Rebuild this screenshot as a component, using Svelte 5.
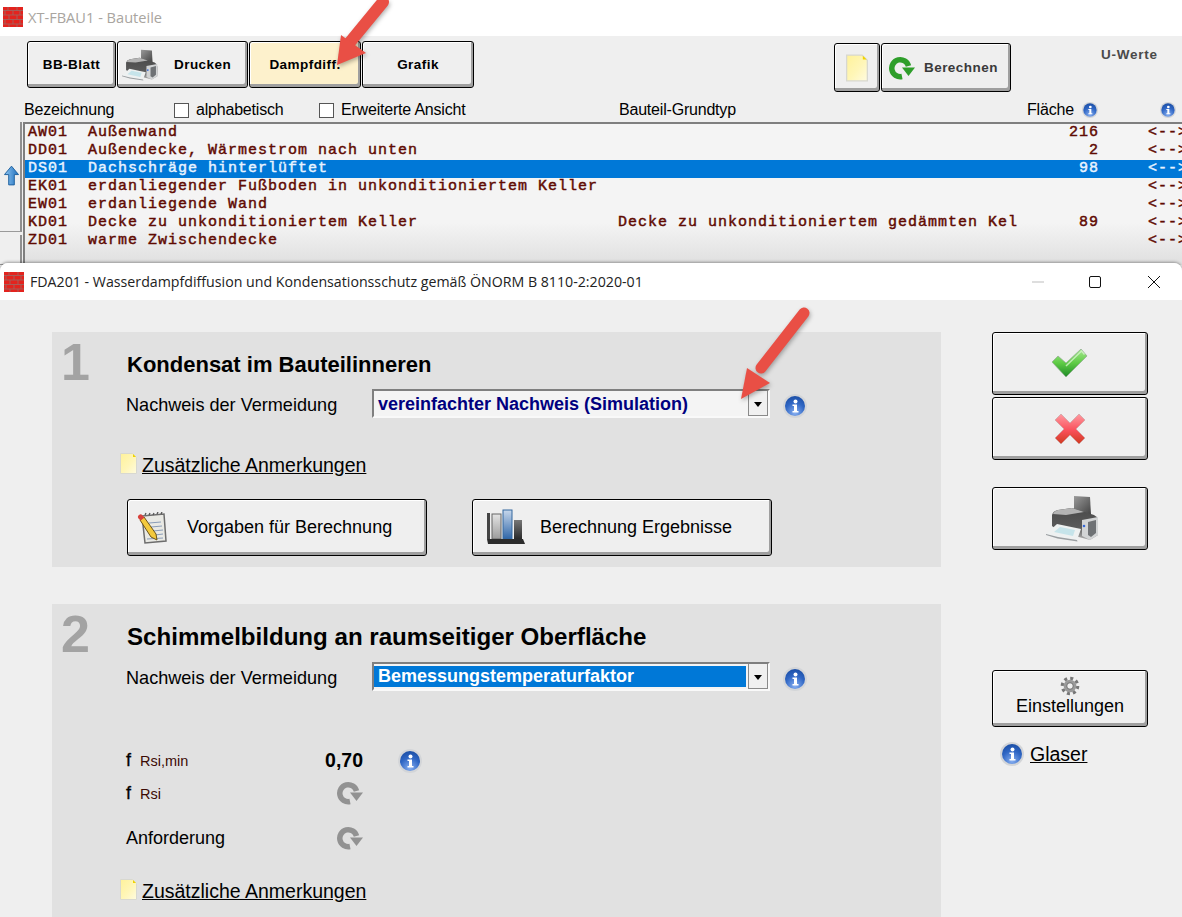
<script>
  const rows = [
    { code: 'AW01', name: 'Außenwand', typ: '', area: '216' },
    { code: 'DD01', name: 'Außendecke, Wärmestrom nach unten', typ: '', area: '2' },
    { code: 'DS01', name: 'Dachschräge hinterlüftet', typ: '', area: '98', sel: true },
    { code: 'EK01', name: 'erdanliegender Fußboden in unkonditioniertem Keller', typ: '', area: '' },
    { code: 'EW01', name: 'erdanliegende Wand', typ: '', area: '' },
    { code: 'KD01', name: 'Decke zu unkonditioniertem Keller', typ: 'Decke zu unkonditioniertem gedämmten Kel', area: '89' },
    { code: 'ZD01', name: 'warme Zwischendecke', typ: '', area: '' }
  ];
</script>

{#snippet brick()}
  <svg class="brick" width="20" height="20" viewBox="0 0 20 20">
    <rect width="20" height="20" fill="#e3231e"/>
    <path d="M0 3.500h20M0 8h20M0 12.500h20M0 17h20M5 0v3.500M14 0v3.500M2 3.500v4.500M10 3.500v4.500M17 3.500v4.500M6 8v4.500M14 8v4.500M2 12.500v4.500M10 12.500v4.500M17 12.500v4.500M6 17v3M14 17v3" stroke="#9a6a66" stroke-width=".8" fill="none"/>
  </svg>
{/snippet}

{#snippet printer(w, h)}
  <svg width={w} height={h} viewBox="0 0 53 47">
    <path d="M28 1l16 1 1 17H28z" fill="url(#prBack)"/>
    <path d="M6 20q1-4 6-5l14-2 22 7q4 2 4 6v14l-8 5-30-8-8-6z" fill="url(#prBody)"/>
    <path d="M7 19q1-3 5-4l14-2 12 4-18 3z" fill="#b4b4b4"/>
    <path d="M36 25l16-3v18l-8 5-8-4z" fill="#d2d4d5"/>
    <path d="M42 27l8-2v13l-5 4-3-2z" fill="#6f7275"/>
    <circle cx="38" cy="31" r="1.300" fill="#3568d8"/>
    <path d="M0 39l11-10 24 5-4 11-19-3z" fill="#eef1f1"/>
    <path d="M8 37l6-5 15 3-2 6z" fill="#c6e4ea"/>
    <path d="M0 39l12 3 19 3 .5 1.500-20-3L0 40z" fill="#9a9ea1"/>
  </svg>
{/snippet}

{#snippet info(size = 24)}
  <svg class="info" width={size} height={size} viewBox="0 0 24 24">
    <circle cx="12" cy="12" r="12" fill="#d3d5d8"/>
    <circle cx="12" cy="12" r="10" fill="url(#infoFill)"/>
    <circle cx="12.500" cy="7.500" r="2" fill="#fff"/>
    <path d="M9.500 10.500h4.500v6.500h1.500v1.500h-6V17H11v-5H9.500z" fill="#fff"/>
  </svg>
{/snippet}

{#snippet refresh(fill, w = 26, h = 24)}
  <svg width={w} height={h} viewBox="0 0 26 24">
    <path d="M13 20.500A8.500 8.500 0 1 1 19.500 10" fill="none" stroke={fill} stroke-width="5.500"/>
    <path d="M13 11.500h13l-6.500 8.500z" fill={fill}/>
  </svg>
{/snippet}

{#snippet note(w = 17, h = 21)}
  <svg width={w} height={h} viewBox="0 0 17 21">
    <path d="M.5.500h12l4 4v16H.500z" fill="url(#noteFill)" stroke="#d8d8d0"/>
    <path d="M13 1l3 3h-3z" fill="#f2d400"/>
  </svg>
{/snippet}

<svg class="defs" width="0" height="0" aria-hidden="true">
  <defs>
    <linearGradient id="prBack" x1="0" y1="0" x2="1" y2="1"><stop offset="0" stop-color="#9a9a9a"/><stop offset="1" stop-color="#444"/></linearGradient>
    <linearGradient id="prBody" x1="0" y1="0" x2="0" y2="1"><stop offset="0" stop-color="#4a4a4a"/><stop offset=".6" stop-color="#5a5a5a"/><stop offset="1" stop-color="#b0b0b0"/></linearGradient>
    <radialGradient id="infoFill" cx=".5" cy=".85" r=".85"><stop offset="0" stop-color="#86aef0"/><stop offset=".6" stop-color="#2f66c4"/><stop offset="1" stop-color="#1c4fa6"/></radialGradient>
    <linearGradient id="noteFill" x1="0" y1="0" x2="1" y2="1"><stop offset="0" stop-color="#fff29a"/><stop offset=".55" stop-color="#fff6b8"/><stop offset="1" stop-color="#fffbe0"/></linearGradient>
    <linearGradient id="chk" x1="0" y1="0" x2="0" y2="1"><stop offset="0" stop-color="#a6e890"/><stop offset=".5" stop-color="#5fcb45"/><stop offset="1" stop-color="#1d8a26"/></linearGradient>
    <linearGradient id="crs" x1="0" y1="0" x2="0" y2="1"><stop offset="0" stop-color="#ff9aa0"/><stop offset=".55" stop-color="#f9505a"/><stop offset="1" stop-color="#cf3a1f"/></linearGradient>
    <linearGradient id="upA" x1="0" y1="0" x2="1" y2="0"><stop offset="0" stop-color="#8fc6f2"/><stop offset="1" stop-color="#1f6fbd"/></linearGradient>
    <linearGradient id="barB" x1="0" y1="0" x2="0" y2="1"><stop offset="0" stop-color="#c8d8ec"/><stop offset="1" stop-color="#2f66a8"/></linearGradient>
    <linearGradient id="barG" x1="0" y1="0" x2="0" y2="1"><stop offset="0" stop-color="#e4e4e4"/><stop offset="1" stop-color="#9c9c9c"/></linearGradient>
    <linearGradient id="barD" x1="0" y1="0" x2="0" y2="1"><stop offset="0" stop-color="#777"/><stop offset="1" stop-color="#2a2a2a"/></linearGradient>
  </defs>
</svg>

<div class="screen">
  <section class="parent">
    <header class="titlebar parent-title">
      {@render brick()}
      <span>XT-FBAU1 - Bauteile</span>
    </header>

    <div class="toolbar">
      <button class="btn tb bb">BB-Blatt</button>
      <button class="btn tb druck">{@render printer(36, 32)}<span>Drucken</span></button>
      <button class="btn tb damp">Dampfdiff.</button>
      <button class="btn tb gra">Grafik</button>
      <button class="btn tb2 notebtn">{@render note(22, 28)}</button>
      <button class="btn tb2 calc">{@render refresh('#2e9e2a')}<span>Berechnen</span></button>
      <div class="uwerte">U-Werte</div>
    </div>

    <div class="heads">
      <span>Bezeichnung</span>
      <label class="chk c1"><i></i>alphabetisch</label>
      <label class="chk"><i></i>Erweiterte Ansicht</label>
      <span>Bauteil-Grundtyp</span>
      <span class="flaeche">Fläche {@render info(16)}</span>
      <span class="lastinfo">{@render info(16)}</span>
    </div>

    <div class="listwrap">
      <div class="gutter">
        <div class="gbtn first">
          <svg width="15" height="21" viewBox="0 0 16 21">
            <path d="M8 .500L15.500 9.500H11V20.500H5V9.500H.500z" fill="url(#upA)" stroke="#1c5f9e"/>
          </svg>
        </div>
        <div class="gbtn"></div>
      </div>
      <div class="list">
        {#each rows as r}
          <div class="row" class:sel={r.sel}>
            <span>{r.code}  {r.name}</span>
            <span>{r.typ}</span>
            <span class="num">{r.area}</span>
            <span class="ptr">&lt;--&gt;</span>
          </div>
        {/each}
      </div>
    </div>
  </section>

  <section class="win">
    <header class="titlebar win-title">
      {@render brick()}
      <span class="wt">FDA201 - Wasserdampfdiffusion und Kondensationsschutz gemäß ÖNORM B 8110-2:2020-01</span>
      <div class="ctrls">
        <svg width="14" height="14" viewBox="0 0 14 14"><path d="M1 7h12" stroke="#bdbdbd"/></svg>
        <svg class="maxi" width="14" height="14" viewBox="0 0 14 14"><rect x="1.500" y="1.500" width="11" height="11" rx="1.500" fill="none" stroke="#111"/></svg>
        <svg width="14" height="14" viewBox="0 0 14 14"><path d="M1 1l12 12M13 1L1 13" stroke="#111" fill="none"/></svg>
      </div>
    </header>

    <div class="body">
      <div class="panels">
        <div class="panel p1">
          <div class="bignum">1</div>
          <div class="content">
            <h2>Kondensat im Bauteilinneren</h2>
            <div class="formrow">
              <span class="lbl">Nachweis der Vermeidung</span>
              <div class="select"><span>vereinfachter Nachweis (Simulation)</span><b class="drop"></b></div>
              {@render info(24)}
            </div>
            <div class="anm">{@render note()}<a href="#a">Zusätzliche Anmerkungen</a></div>
            <div class="actions">
              <button class="btn act first-act">
                <svg width="30" height="32" viewBox="0 0 30 32">
                  <path d="M5 4l22-2 2 27-21 2z" fill="#e9e9e4" stroke="#6d6d6d" stroke-width="1.500"/>
                  <path d="M8 3l1-2M12 3l1-2M16 3l1-2M20 2l1-2M24 2l1-2" stroke="#555" stroke-width="1.300"/>
                  <path d="M12 11l12-1M14 15l11-1M16 19l10-1M18 23l8-1M10 27l16-1" stroke="#8a9db8"/>
                  <path d="M3 8l4-3 12 17 1 6-6-3z" fill="#f3c93c" stroke="#6b5316"/>
                  <path d="M1.500 6.500a2.500 2.500 0 0 1 4-3l2 2-4 3z" fill="#d8413b"/>
                </svg>
                <span>Vorgaben für Berechnung</span>
              </button>
              <button class="btn act second-act">
                <svg width="40" height="37" viewBox="0 0 40 37">
                  <path d="M1 4h3v26H1z" fill="#444"/>
                  <rect x="6" y="5" width="9" height="25" fill="url(#barG)" stroke="#666"/>
                  <rect x="17" y="1" width="9" height="29" fill="url(#barB)" stroke="#34699f"/>
                  <rect x="28" y="11" width="8" height="19" fill="url(#barD)"/>
                  <path d="M1 30h36l2 5H2z" fill="#2c2c2c"/>
                </svg>
                <span>Berechnung Ergebnisse</span>
              </button>
            </div>
          </div>
        </div>

        <div class="panel p2">
          <div class="bignum">2</div>
          <div class="content">
            <h2>Schimmelbildung an raumseitiger Oberfläche</h2>
            <div class="formrow">
              <span class="lbl">Nachweis der Vermeidung</span>
              <div class="select active"><span>Bemessungstemperaturfaktor</span><b class="drop"></b></div>
              {@render info(24)}
            </div>
            <div class="vals">
              <div class="val r1">
                <span class="vl"><em>f</em><small>Rsi,min</small></span>
                <strong>0,70</strong>
                {@render info(24)}
              </div>
              <div class="val r2">
                <span class="vl"><em>f</em><small>Rsi</small></span>
                {@render refresh('#929292')}
              </div>
              <div class="val r3">
                <span class="vl plain">Anforderung</span>
                {@render refresh('#929292')}
              </div>
            </div>
            <div class="anm second">{@render note()}<a href="#b">Zusätzliche Anmerkungen</a></div>
          </div>
        </div>
      </div>

      <aside class="side">
        <button class="btn sb">
          <svg width="36" height="29" viewBox="0 0 36 29">
            <path d="M0 13l6-6 8 7L29 0l6 7-21 21z" fill="url(#chk)" stroke="#8fa98f" stroke-width=".7"/>
            <path d="M14 17L29.500 2l3 3.500" fill="none" stroke="#d4f3cc" stroke-width="1.500" opacity=".8"/>
          </svg>
        </button>
        <button class="btn sb">
          <svg width="32" height="32" viewBox="0 0 32 32">
            <path d="M7 1l9 9 9-9 6 6-9 9 9 9-6 6-9-9-9 9-6-6 9-9-9-9z" fill="url(#crs)" stroke="#c9a4a4" stroke-width=".7"/>
          </svg>
        </button>
        <button class="btn sb pr">{@render printer(53, 47)}</button>
        <button class="btn sb set">
          <svg width="20" height="20" viewBox="0 0 22 22">
            <circle cx="11" cy="11" r="8.500" fill="none" stroke="#777" stroke-width="3.500" stroke-dasharray="3.300 3.370"/>
            <circle cx="11" cy="11" r="7" fill="#9a9a9a"/>
            <circle cx="11" cy="11" r="3.600" fill="#efefef" stroke="#666"/>
          </svg>
          <span>Einstellungen</span>
        </button>
        <div class="glaser">{@render info(24)}<a href="#g">Glaser</a></div>
      </aside>
    </div>
  </section>

  <svg class="arrow a1" width="70" height="80" viewBox="0 0 70 80">
    <path d="M56 2L19 47" stroke="#e94f45" stroke-width="12" stroke-linecap="round" fill="none"/>
    <path d="M10 65L14 35 39 53z" fill="#e94f45"/>
  </svg>
  <svg class="arrow a2" width="80" height="100" viewBox="0 0 80 100">
    <path d="M68 8L25 63" stroke="#e94f45" stroke-width="11" stroke-linecap="round" fill="none"/>
    <path d="M5 94L11 63 34 78z" fill="#e94f45"/>
  </svg>
</div>

<style>
  :global(body) { margin: 0; background: #efefef; }
  .defs { position: absolute; }
  .screen {
    position: relative;
    width: 1182px;
    height: 917px;
    overflow: hidden;
    display: flex;
    flex-direction: column;
    background: #efefef;
    font-family: "Liberation Sans", Arial, sans-serif;
    color: #000;
  }
  svg { display: block; flex: none; }
  a { color: #000; }

  .titlebar {
    display: flex;
    align-items: center;
    background: #fff;
    font-family: "Open Sans", "Noto Sans", sans-serif;
  }
  .parent { height: 263px; flex: none; }
  .parent-title { height: 36px; box-sizing: border-box; padding: 0 0 2px 3px; gap: 5px; color: #a9a5a0; font-size: 14.600px; }

  .btn {
    display: flex;
    align-items: center;
    justify-content: center;
    box-sizing: border-box;
    margin: 0;
    padding: 0;
    border: 1px solid #000;
    border-radius: 3px;
    background: #efefef;
    box-shadow: inset -2px -3px 0 #9f9f9f, inset 1px 1px 0 #fff;
    font-family: "Liberation Sans", Arial, sans-serif;
    color: #000;
  }

  .toolbar {
    height: 62px;
    box-sizing: border-box;
    padding: 5px 0 0 27px;
    display: flex;
    align-items: flex-start;
    gap: 1px;
  }
  .tb, .tb2 { font-size: 13.500px; font-weight: 700; letter-spacing: .45px; }
  .tb { height: 47px; }
  .bb { width: 89px; }
  .druck { width: 131px; justify-content: flex-start; padding-left: 4px; }
  .druck span { margin-left: 16px; }
  .damp { width: 112px; background: #fdf1cc; }
  .gra { width: 112px; }
  .tb2 { height: 49px; margin-top: 2px; }
  .notebtn { width: 46px; margin-left: 359px; }
  .calc { width: 130px; justify-content: flex-start; padding-left: 7px; color: #3a3a3a; }
  .calc span { margin-left: 9px; }
  .uwerte {
    margin: 6px 0 0 89px;
    font-size: 13.500px;
    font-weight: 700;
    color: #4a4a4a;
    letter-spacing: .75px;
  }

  .heads {
    box-sizing: border-box;
    padding: 2px 0 0 24px;
    display: grid;
    grid-template-columns: 151px 144px 300px 408px 124px 1fr;
    align-items: center;
    font-size: 16px;
    letter-spacing: -.2px;
    height: 22px;
    line-height: 18px;
  }
  .chk { display: flex; align-items: center; }
  .chk i {
    width: 13px;
    height: 13px;
    margin-right: 7px;
    border: 1px solid #555;
    background: #fff;
    flex: none;
  }
  .c1 { margin-left: -1px; }
  .flaeche { display: flex; align-items: center; gap: 8px; }
  .lastinfo { margin-left: 9px; }

  .listwrap {
    display: flex;
    height: 143px;
    margin-top: 2px;
  }
  .gutter {
    width: 22px;
    flex: none;
    display: flex;
    flex-direction: column;
    gap: 3px;
  }
  .gbtn {
    box-sizing: border-box;
    height: 30px;
    display: flex;
    justify-content: center;
    background: #efefef;
    border-right: 2px solid #8f8f8f;
    border-bottom: 1px solid #9a9a9a;
  }
  .gbtn.first { height: 110px; padding: 43px 0 0 2px; }
  .list {
    flex: 1;
    margin-left: 1px;
    box-sizing: border-box;
    border-top: 2px solid #7f7f7f;
    border-left: 2px solid #7f7f7f;
    background: linear-gradient(#f4f4f4 70%, #dfdfdf);
    font-family: "Liberation Mono", "Courier New", monospace;
    font-size: 15px;
    letter-spacing: 1px;
    color: #600a02;
  }
  .row {
    height: 18px;
    line-height: 18px;
    padding-left: 3px;
    display: grid;
    grid-template-columns: 590px 400px 81px 49px;
    white-space: pre;
    -webkit-text-stroke: .45px currentColor;
  }
  .row .num { text-align: right; }
  .row .ptr { grid-column: 4; padding-left: 49px; }
  .row.sel { background: #0078d7; color: #e8f3ff; }

  .win {
    flex: 1;
    min-height: 0;
    position: relative;
    display: flex;
    flex-direction: column;
    border-radius: 8px 8px 0 0;
    box-shadow: 0 -1px 3px rgba(0, 0, 0, .35);
    background: #efefef;
  }
  .win-title {
    height: 37px;
    flex: none;
    padding-left: 4px;
    border-radius: 8px 8px 0 0;
    gap: 6px;
    color: #222;
  }
  .wt { font-size: 14.200px; }
  .ctrls { margin-left: auto; display: flex; gap: 44px; padding-right: 21px; }
  .maxi { margin: 0 1px 0 -1px; }

  .body { display: flex; padding: 32px 0 0 52px; gap: 51px; min-height: 0; flex: 1; }
  .panels { width: 889px; flex: none; display: flex; flex-direction: column; gap: 37px; }
  .panel { background: #e1e1e1; display: grid; grid-template-columns: 75px 1fr; }
  .p1 { height: 235px; flex: none; }
  .p2 { flex: 1; }
  .bignum {
    padding: 0 0 0 9px;
    font-size: 52px;
    font-weight: 700;
    line-height: 60px;
    color: #a3a3a3;
  }
  h2 {
    margin: 21px 0 12px;
    font-size: 22px;
    line-height: 24px;
    font-weight: 700;
  }
  .p2 h2 { margin: 21px 0 13px; font-size: 24.100px; }
  .formrow { display: flex; align-items: center; height: 29px; margin-left: -1px; }
  .lbl { width: 246px; flex: none; font-size: 18.100px; margin-top: 3px; }
  .formrow :global(.info) { margin-left: 13px; margin-top: 5px; }
  .select {
    box-sizing: border-box;
    width: 398px;
    height: 29px;
    padding: 2px 22px 2px 0;
    display: flex;
    align-items: stretch;
    position: relative;
    background: #f4f4f4;
    border: 2px solid;
    border-color: #7f7f7f #f9f9f9 #f9f9f9 #7f7f7f;
    font-size: 18px;
    font-weight: 700;
    color: #00007f;
  }
  .select span { flex: 1; padding-left: 4px; line-height: 22px; }
  .select.active span { background: #0078d7; color: #fff; padding-left: 4px; line-height: 21px; }
  .drop {
    position: absolute;
    right: 0;
    top: 0;
    width: 20px;
    height: 25px;
    box-sizing: border-box;
    background: #f0f0f0;
    border: 1px solid #8a8a8a;
    border-top: 0;
  }
  .drop::after {
    content: "";
    position: absolute;
    left: 5px;
    top: 11px;
    border: 4.500px solid transparent;
    border-top: 5px solid #000;
    border-bottom: 0;
  }

  .anm {
    display: flex;
    align-items: center;
    gap: 5px;
    height: 26px;
    margin: 34px 0 0 -7px;
    font-size: 19.500px;
  }
  .anm svg { margin-top: -4px; }
  .anm.second { margin-top: 25px; }

  .actions { display: flex; gap: 45px; margin-top: 21px; }
  .act { width: 300px; height: 57px; font-size: 18px; justify-content: flex-start; }
  .first-act { padding-left: 9px; }
  .first-act span { margin-left: 20px; }
  .second-act { padding-left: 13px; }
  .second-act span { margin-left: 14px; }

  .vals { margin-top: 54px; }
  .val { display: grid; grid-template-columns: 237px auto auto; height: 30px; align-items: center; justify-content: start; margin-left: -1px; }
  .val.r2, .val.r3 { grid-template-columns: 211px auto; }
  .val.r2 { margin-top: 3px; }
  .val.r3 { margin-top: 15px; }
  .vl { display: flex; align-items: baseline; font-size: 18px; }
  .vl em { font-style: normal; font-weight: 400; width: 14px; -webkit-text-stroke: .3px #000; }
  .vl small { font-size: 14.500px; color: #3c0a05; }
  .plain { font-size: 18px; }
  .val strong { font-size: 19.500px; margin-left: -38px; width: 38px; text-align: right; }
  .val.r1 { grid-template-columns: 237px 0 auto; }
  .val.r1 :global(.info) { margin-left: 35px; margin-top: 2px; }

  .side { width: 156px; flex: none; display: flex; flex-direction: column; }
  .sb { width: 156px; height: 63px; flex: none; }
  .sb + .sb { margin-top: 2px; }
  .sb.pr { margin-top: 27px; padding-left: 5px; }
  .sb.set {
    margin-top: 120px;
    height: 57px;
    flex-direction: column;
    justify-content: flex-start;
    padding-top: 5px;
    font-size: 18px;
    gap: 0;
  }
  .sb.set span { line-height: 20px; }
  .glaser {
    display: flex;
    align-items: center;
    gap: 6px;
    height: 24px;
    margin: 15px 0 0 8px;
    font-size: 19.500px;
  }

  .arrow { position: absolute; filter: drop-shadow(1px 2px 2px rgba(0, 0, 0, .3)); }
  .a1 { left: 327px; top: 0; }
  .a2 { left: 736px; top: 305px; }
</style>
